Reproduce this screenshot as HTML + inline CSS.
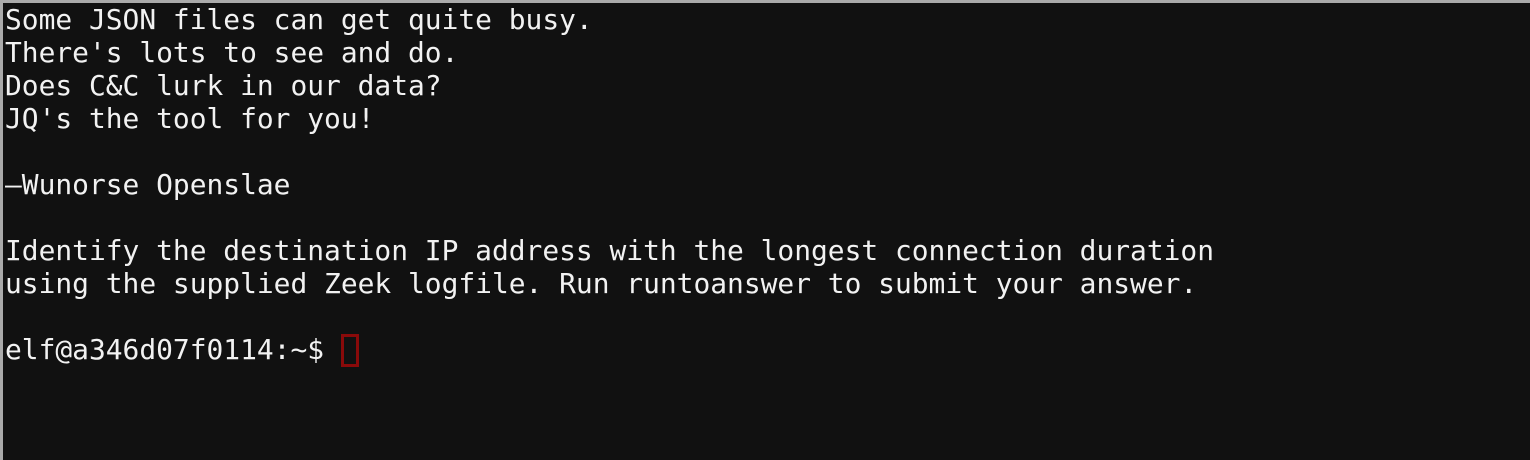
<!DOCTYPE html>
<html><head><style>
html,body{margin:0;padding:0;}
body{width:1530px;height:460px;background:#aaaaaa;overflow:hidden;position:relative;}
.term{position:absolute;left:3px;top:3px;right:0;bottom:0;background:#111111;}
pre{margin:0;position:absolute;left:2px;top:0px;font-family:"DejaVu Sans Mono",monospace;font-size:27.9px;line-height:33px;color:#f2f2f2;}
.cur{position:absolute;left:338px;top:331px;width:12px;height:27px;border:3px solid #8a0a0a;}
</style></head><body><div class="term"><pre>Some JSON files can get quite busy.
There's lots to see and do.
Does C&amp;C lurk in our data?
JQ's the tool for you!

–Wunorse Openslae

Identify the destination IP address with the longest connection duration
using the supplied Zeek logfile. Run runtoanswer to submit your answer.

elf@a346d07f0114:~$ </pre><div class="cur"></div></div></body></html>
